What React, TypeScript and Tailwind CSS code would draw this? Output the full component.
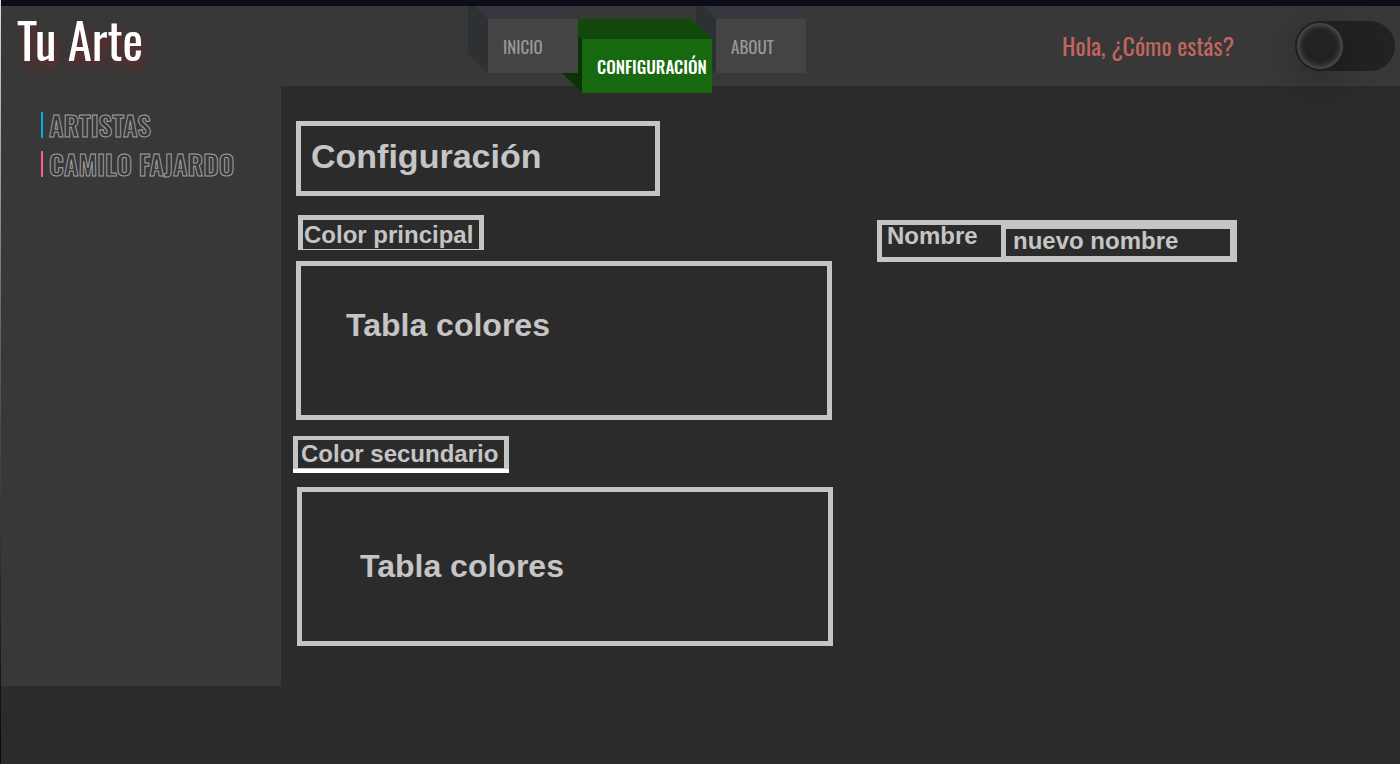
import { useState } from 'react';

const condensed = "font-['Oswald','Roboto_Condensed','Liberation_Sans_Narrow',sans-serif]";

type Tab = { label: string; item: string; face: string; top: string; side: string };

const tabs: Tab[] = [
  {
    label: 'INICIO',
    item: 'z-30 w-[90px]',
    face: 'bg-[#444444] text-[#999999]',
    top: 'bg-[#36373f]',
    side: 'bg-[#2e3133]',
  },
  {
    label: 'CONFIGURACIÓN',
    item: 'z-20 mt-5 w-[130px]',
    face: 'bg-[#17690f] font-medium text-white',
    top: 'bg-[#114a0a]',
    side: 'bg-[#0b3307]',
  },
  {
    label: 'ABOUT',
    item: 'z-10 w-[90px]',
    face: 'bg-[#444444] text-[#999999]',
    top: 'bg-[#36373f]',
    side: 'bg-[#2e3133]',
  },
];

function BlockTab({ tab }: { tab: Tab }) {
  return (
    <li className={`relative ${tab.item}`}>
      <span className={`absolute -top-5 left-0 h-5 w-full origin-bottom-left skew-x-[45deg] ${tab.top}`} />
      <span className={`absolute top-0 -left-5 h-full w-5 origin-right skew-y-[45deg] ${tab.side}`} />
      <a href="#" className={`relative flex h-[54px] items-center pt-[2px] pl-[15px] text-[17px] whitespace-nowrap ${tab.face}`}>
        {tab.label}
      </a>
    </li>
  );
}

function ThemeSwitch() {
  const [on, setOn] = useState(false);
  return (
    <label className="relative flex h-[50px] w-[100px] shrink-0 cursor-pointer items-center rounded-full bg-[#222222] px-[2px]">
      <input
        type="checkbox"
        aria-label="Tema"
        checked={on}
        onChange={(e) => setOn(e.target.checked)}
        className="peer absolute inset-0 cursor-pointer opacity-0"
      />
      <span className="size-[46px] rounded-full bg-[#222222] shadow-[inset_0_0_6px_1px_#666666,0_8px_40px_rgba(0,0,0,0.3)] peer-checked:translate-x-[50px]" />
    </label>
  );
}

function ColorTable({ inset }: { inset: string }) {
  return (
    <section className={`h-[159px] w-full max-w-[536px] border-5 border-[#c5c5c5] ${inset}`}>
      <p className="text-[32px] leading-9 font-bold">Tabla colores</p>
    </section>
  );
}

export default function App() {
  return (
    <div className="flex min-h-screen bg-[#2b2b2b]">
      <div className="w-px shrink-0 bg-linear-to-b from-[#dddddd] via-[#55555a] to-[#08080c]" />
      <div className="min-w-0 grow">
        <div className="relative z-40 h-[6px] bg-[#0d0c19]" />
        <header className={`grid h-20 grid-cols-[41fr_auto_50fr] bg-[#383838] ${condensed}`}>
          <h1 className="pl-4 text-[49px] leading-[66px] font-normal whitespace-nowrap text-white [text-shadow:3px_6px_8px_#6e2a2a]">
            Tu Arte
          </h1>
          <nav className="relative z-30 h-20 pt-[13px]">
            <ul className="flex items-start gap-1">
              {tabs.map((tab) => (
                <BlockTab key={tab.label} tab={tab} />
              ))}
            </ul>
          </nav>
          <div className="flex h-20 items-center justify-end gap-[61px] pr-[5px]">
            <p className="pb-[2px] text-2xl whitespace-nowrap text-[#c1655f]">Hola, ¿Cómo estás?</p>
            <ThemeSwitch />
          </div>
        </header>
        <div className="flex items-start">
          <aside className={`h-[600px] w-[280px] shrink-0 bg-[#383838] pt-[26px] pl-10 ${condensed}`}>
            <ul className="flex flex-col gap-[13px] text-[27px] leading-[26px] font-semibold text-transparent [-webkit-text-stroke:1px_#a0a0a0]">
              <li className="border-l-2 border-[#00aee0] pl-[6px]">
                <a href="#">ARTISTAS</a>
              </li>
              <li className="border-l-2 border-[#ff6090] pl-[6px]">
                <a href="#">CAMILO FAJARDO</a>
              </li>
            </ul>
          </aside>
          <main className="min-w-0 grow px-[15px] pt-[35px] font-['Liberation_Sans',sans-serif] text-[#c5c5c5]">
            <h2 className="h-[75px] w-full max-w-[364px] border-5 border-[#c5c5c5] pt-[10px] pl-[10px] text-[34px] leading-10 font-bold">
              Configuración
            </h2>
            <div className="flex items-start gap-[45px] pt-[19px]">
              <div className="flex w-[536px] flex-col items-start">
                <h3 className="ml-[2px] w-[186px] border-5 border-b border-[#c5c5c5] pl-px text-2xl leading-[29px] font-bold whitespace-nowrap">
                  Color principal
                </h3>
                <div className="w-full pt-[11px]">
                  <ColorTable inset="pt-[41px] pl-[45px]" />
                </div>
                <div className="-ml-[3px] mt-4 border-b-4 border-white">
                  <h3 className="w-[216px] border-x-5 border-t-4 border-b border-[#c5c5c5] pl-[3px] text-2xl leading-7 font-bold whitespace-nowrap">
                    Color secundario
                  </h3>
                </div>
                <div className="ml-px w-full pt-[14px]">
                  <ColorTable inset="pt-14 pl-[58px]" />
                </div>
              </div>
              <form className="mt-[5px] flex h-[42px] w-[360px] border-5 border-[#c5c5c5] text-2xl font-bold">
                <label htmlFor="nombre" className="w-[119px] shrink-0 pl-[5px] leading-[22px]">
                  Nombre
                </label>
                <input
                  id="nombre"
                  type="text"
                  defaultValue="nuevo nombre"
                  className="min-w-0 grow border-t-4 border-r-2 border-b border-l-5 border-[#c5c5c5] bg-transparent pb-1 pl-[7px] leading-[23px] outline-none"
                />
              </form>
            </div>
          </main>
        </div>
      </div>
    </div>
  );
}
